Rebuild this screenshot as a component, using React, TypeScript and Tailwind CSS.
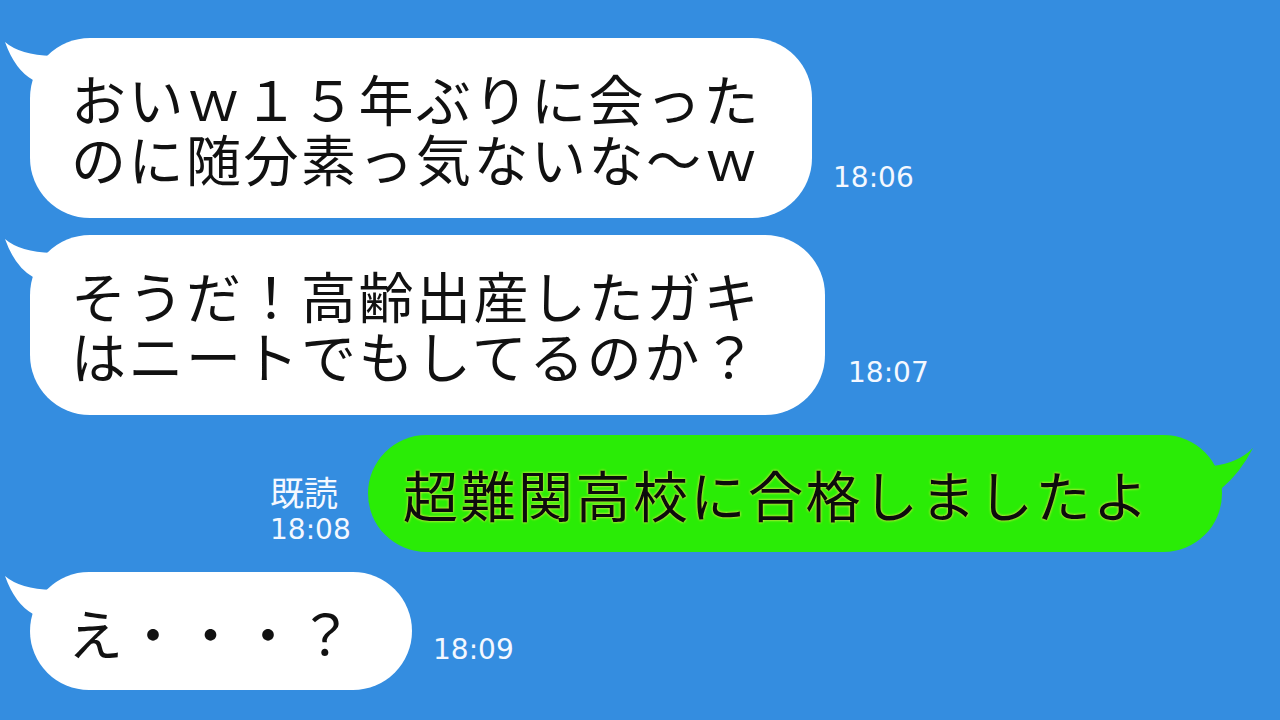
const jp = { fontFamily: '"Noto Sans CJK JP", "Noto Sans", sans-serif' };
const clock = { fontFamily: '"DejaVu Sans", "Noto Sans", sans-serif' };

// tail on the top-left corner of an incoming bubble
function LeftTail() {
  return (
    <svg className="absolute left-[-30px] top-0" width="60" height="60" viewBox="0 0 60 60">
      <path d="M5 4 Q20 17 52 18 L60 30 L60 60 L33 60 L33 42 Q15 32 5 4 Z" fill="#ffffff" />
    </svg>
  );
}

// tail on the top-right corner of the outgoing bubble
function RightTail() {
  return (
    <svg className="absolute right-[-34px] top-0" width="60" height="60" viewBox="0 0 60 60">
      <path d="M57 13 Q42 28 17 31 L5 45 L20 60 L26 53 Q44 38 57 13 Z" fill="#2aec06" />
    </svg>
  );
}

function Time({ t, mb }: { t: string; mb: string }) {
  return (
    <span className={`text-[28px] leading-none text-[#f4f8ff] ${mb}`} style={clock}>
      {t}
    </span>
  );
}

function Lines({ lines }: { lines: string[] }) {
  return (
    <div className="flex flex-col">
      {lines.map((l) => (
        <div key={l} className="h-[60px] text-[55px] leading-[60px] tracking-[2.5px] text-[#111] whitespace-nowrap">
          {l}
        </div>
      ))}
    </div>
  );
}

export default function App() {
  return (
    <div className="w-[1280px] h-[720px] overflow-hidden bg-[#348de0] flex flex-col pt-[38px] pl-[30px]" style={jp}>
      <div className="flex items-end gap-[21px]">
        <div className="relative w-[782px] h-[180px] rounded-[60px] bg-white pl-[41px] pt-[29px]">
          <LeftTail />
          <Lines lines={["おいｗ１５年ぶりに会った", "のに随分素っ気ないな～ｗ"]} />
        </div>
        <Time t="18:06" mb="mb-[26px]" />
      </div>

      <div className="flex items-end gap-[23px] mt-[17px]">
        <div className="relative w-[795px] h-[180px] rounded-[60px] bg-white pl-[41px] pt-[29px]">
          <LeftTail />
          <Lines lines={["そうだ！高齢出産したガキ", "はニートでもしてるのか？"]} />
        </div>
        <Time t="18:07" mb="mb-[28px]" />
      </div>

      <div className="flex items-end ml-[240px] mt-[20px]">
        <div className="w-[85px] flex flex-col items-start text-[#f4f8ff] mb-[3px]">
          <span className="text-[34px] leading-[38px]">既読</span>
          <span className="text-[28px] leading-[38px]" style={clock}>18:08</span>
        </div>
        <div className="relative ml-[13px] w-[854px] h-[117px] rounded-full bg-[#2aec06] flex items-center pl-[35px]">
          <RightTail />
          <span
            className="text-[55px] leading-none tracking-[2.5px] text-[#0c0c0c] whitespace-nowrap"
            style={{ textShadow: "0 0 2px #d8ff40, 0 0 3px #d8ff40, 0 0 1px #0c0c0c" }}
          >
            超難関高校に合格しましたよ
          </span>
        </div>
      </div>

      <div className="flex items-end gap-[21px] mt-[20px]">
        <div className="relative w-[382px] h-[118px] rounded-full bg-white flex items-center pl-[38px]">
          <LeftTail />
          <span className="text-[55px] leading-none tracking-[2.5px] text-[#111] whitespace-nowrap">え・・・？</span>
        </div>
        <Time t="18:09" mb="mb-[26px]" />
      </div>
    </div>
  );
}
